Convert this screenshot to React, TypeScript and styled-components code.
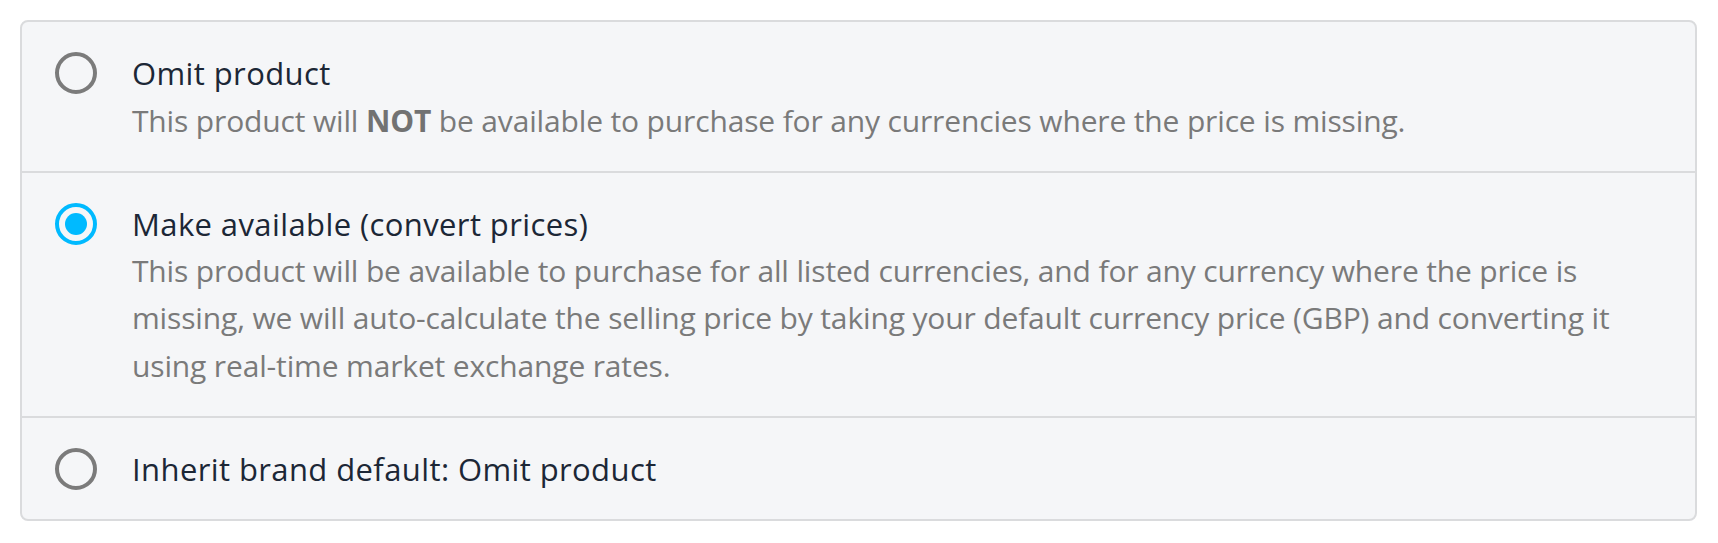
import React, { useState } from 'react';
import styled, { createGlobalStyle } from 'styled-components';

const GlobalStyle = createGlobalStyle`
  html, body {
    margin: 0;
    padding: 0;
    background: #ffffff;
  }
  body {
    font-family: "Open Sans", "Noto Sans", sans-serif;
  }
`;

const Page = styled.div`
  padding: 20px 21px 20px 20px;
`;

const Group = styled.div`
  border: 2px solid #dadbdd;
  border-radius: 8px;
  background: #f5f6f8;
  overflow: hidden;
`;

const Option = styled.label`
  display: flex;
  align-items: flex-start;
  gap: 35px;
  padding: 28px 33px 27px;
  cursor: pointer;

  & + & {
    border-top: 2px solid #dadbdd;
  }
`;

const RadioMark = styled.span<{ $checked: boolean }>`
  flex: none;
  box-sizing: border-box;
  width: 42px;
  height: 42px;
  margin-top: 2px;
  border-radius: 50%;
  border: 4px solid ${(p) => (p.$checked ? '#00baff' : '#7b7b7b')};
  display: flex;
  align-items: center;
  justify-content: center;

  &::after {
    content: '';
    display: ${(p) => (p.$checked ? 'block' : 'none')};
    width: 22px;
    height: 22px;
    border-radius: 50%;
    background: #00baff;
  }
`;

const HiddenInput = styled.input`
  position: absolute;
  opacity: 0;
  width: 0;
  height: 0;
`;

const Body = styled.div`
  flex: 1;
  line-height: 46.5px;
`;

const Title = styled.div`
  color: #1c2736;
  font-size: 31px;
  letter-spacing: 0.4px;
`;

const Description = styled.div`
  color: #7a7a7a;
  font-size: 30px;
  line-height: 47.2px;
  letter-spacing: -0.15px;

  strong {
    font-weight: 700;
    color: #727272;
  }
`;

type Choice = 'omit' | 'convert' | 'inherit';

const App: React.FC = () => {
  const [value, setValue] = useState<Choice>('convert');

  return (
    <Page>
      <GlobalStyle />
      <Group>
        <Option>
          <HiddenInput
            type="radio"
            name="missing-price"
            checked={value === 'omit'}
            onChange={() => setValue('omit')}
          />
          <RadioMark $checked={value === 'omit'} />
          <Body>
            <Title>Omit product</Title>
            <Description>
              This product will <strong>NOT</strong> be available to purchase for any currencies
              where the price is missing.
            </Description>
          </Body>
        </Option>
        <Option>
          <HiddenInput
            type="radio"
            name="missing-price"
            checked={value === 'convert'}
            onChange={() => setValue('convert')}
          />
          <RadioMark $checked={value === 'convert'} />
          <Body>
            <Title>Make available (convert prices)</Title>
            <Description>
              This product will be available to purchase for all listed currencies, and for any
              currency where the price is missing, we will auto-calculate the selling price by
              taking your default currency price (GBP) and converting it using real-time market
              exchange rates.
            </Description>
          </Body>
        </Option>
        <Option>
          <HiddenInput
            type="radio"
            name="missing-price"
            checked={value === 'inherit'}
            onChange={() => setValue('inherit')}
          />
          <RadioMark $checked={value === 'inherit'} />
          <Body>
            <Title>Inherit brand default: Omit product</Title>
          </Body>
        </Option>
      </Group>
    </Page>
  );
};

export default App;
